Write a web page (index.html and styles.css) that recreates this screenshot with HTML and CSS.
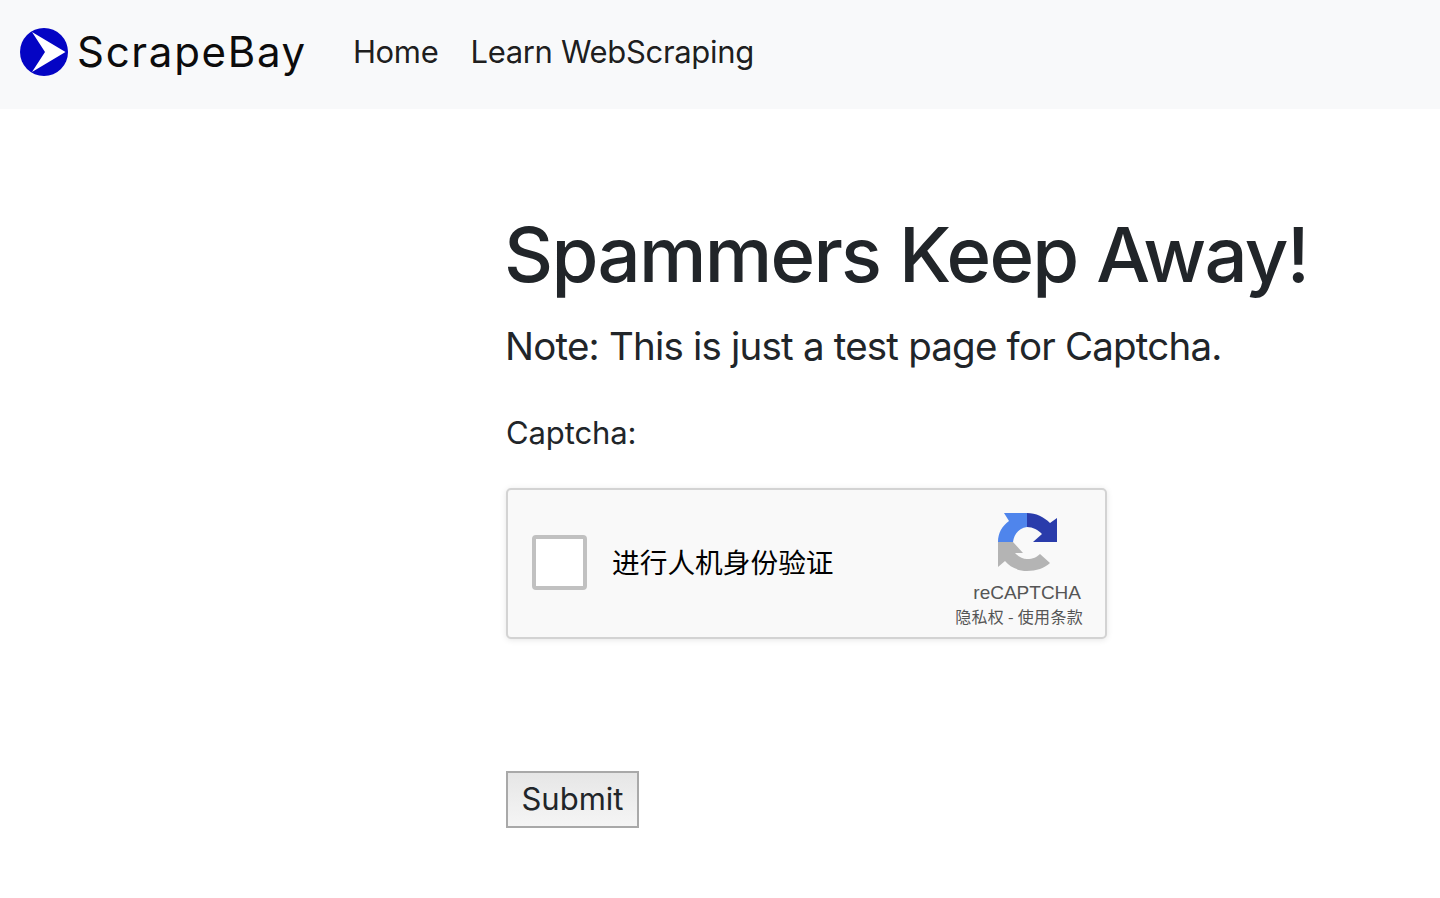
FILE: index.html
```
<!DOCTYPE html>
<html lang="en">
<head>
<meta charset="utf-8">
<title>Spammers Keep Away!</title>
<link rel="stylesheet" href="styles.css">
</head>
<body>
<nav class="navbar">
  <a class="brand" href="#">
    <svg class="brand-icon" viewBox="0 0 48 48" aria-hidden="true">
      <circle cx="24" cy="24" r="24" fill="#0404c4"/>
      <path d="M12 4 L45.5 24 L12 44 L25 24 Z" fill="#fff"/>
    </svg>
    <span class="brand-name">ScrapeBay</span>
  </a>
  <a class="nav-link" href="#">Home</a>
  <a class="nav-link" href="#">Learn WebScraping</a>
</nav>
<main class="content">
  <h1 class="title">Spammers Keep Away!</h1>
  <p class="note">Note: This is just a test page for Captcha.</p>
  <p class="label">Captcha:</p>
  <div class="recaptcha">
    <span class="check"></span>
    <span class="check-label">进行人机身份验证</span>
    <div class="rc-side">
      <svg class="rc-logo" viewBox="0 0 60 60" aria-hidden="true">
        <path d="M6 0 H29 V14 C21 15 16 21 15 29 H0 C0 20 4 13 11 8 Z" fill="#4f85ec"/>
        <path d="M29 0 C38 0 46 4 52 10 L59 5 V29 H35 L44 21 C40 17 35 14 29 14 Z" fill="#2a3cab"/>
        <path d="M0 29 H15 L25 40 H17 C21 44 25 46 29 46 C35 46 39 44 42 41 L52 50 C47 55 38 58 29 58 C20 58 12 54 7 48 L0 54 Z" fill="#b4b4b4"/>
      </svg>
      <span class="rc-name">reCAPTCHA</span>
      <span class="rc-terms">隐私权 - 使用条款</span>
    </div>
  </div>
  <button class="submit" type="button">Submit</button>
</main>
</body>
</html>
```
FILE: styles.css
```
* { box-sizing: border-box; }
html, body { margin: 0; padding: 0; }
body {
  background: #fff;
  color: #212529;
  font-family: Inter, "Noto Sans CJK SC", sans-serif;
}
a { text-decoration: none; }
.navbar {
  display: flex;
  align-items: center;
  height: 109px;
  background: #f8f9fa;
  padding: 0 20px 6px;
}
.brand { display: flex; align-items: center; gap: 9px; margin-right: 46px; }
.brand-icon { width: 48px; height: 48px; display: block; }
.brand-name {
  font-family: Inter, sans-serif;
  font-size: 42px;
  letter-spacing: 1.7px;
  color: #0c0c0c;
  font-weight: 400;
}
.nav-link { font-size: 31px; letter-spacing: -0.33px; color: rgba(0,0,0,.9); margin-right: 32px; }
.content { padding: 102px 0 0 506px; display: flex; flex-direction: column; align-items: flex-start; }
.title { margin: 0 0 0 -2px; font-size: 76px; letter-spacing: -1.7px; line-height: 86px; font-weight: 500; }
.note { margin: 22px 0 0 -1px; font-size: 38.5px; letter-spacing: -0.8px; line-height: 54px; font-weight: 400; }
.label { margin: 37px 0 0; font-size: 31px; letter-spacing: -0.1px; line-height: 45px; }
.recaptcha {
  display: flex;
  align-items: center;
  margin-top: 33px;
  width: 601px;
  height: 151px;
  background: #f9f9f9;
  border: 2px solid #d3d3d3;
  border-radius: 5px;
  box-shadow: 0 1px 6px rgba(0,0,0,.1);
  padding: 0 22px 0 24px;
}
.check {
  width: 55px;
  height: 55px;
  margin-top: -3px;
  background: #fff;
  border: 4px solid #c1c1c1;
  border-radius: 4px;
  flex: none;
}
.check-label { margin: -6px 0 0 25px; font-size: 27.7px; color: #000; font-family: "Noto Sans CJK SC", sans-serif; }
.rc-side { margin-left: auto; margin-top: 13px; display: flex; flex-direction: column; align-items: flex-end; }
.rc-logo { width: 60px; height: 60px; display: block; margin-right: 25px; }
.rc-name { margin: 8px 2px 0 0; font-size: 19px; line-height: 24px; color: #555; font-family: "Liberation Sans", sans-serif; }
.rc-terms { margin-top: -1px; font-size: 16px; letter-spacing: 0.3px; line-height: 24px; color: #555; font-family: "Noto Sans CJK SC", sans-serif; }
.submit {
  margin-top: 132px;
  width: 133px;
  height: 57px;
  font: 400 31px Inter, sans-serif;
  color: #212529;
  background: linear-gradient(#e6e6e6, #f5f5f5);
  border: 2px solid #a9a9a9;
  padding: 0 0 2px;
}
```
